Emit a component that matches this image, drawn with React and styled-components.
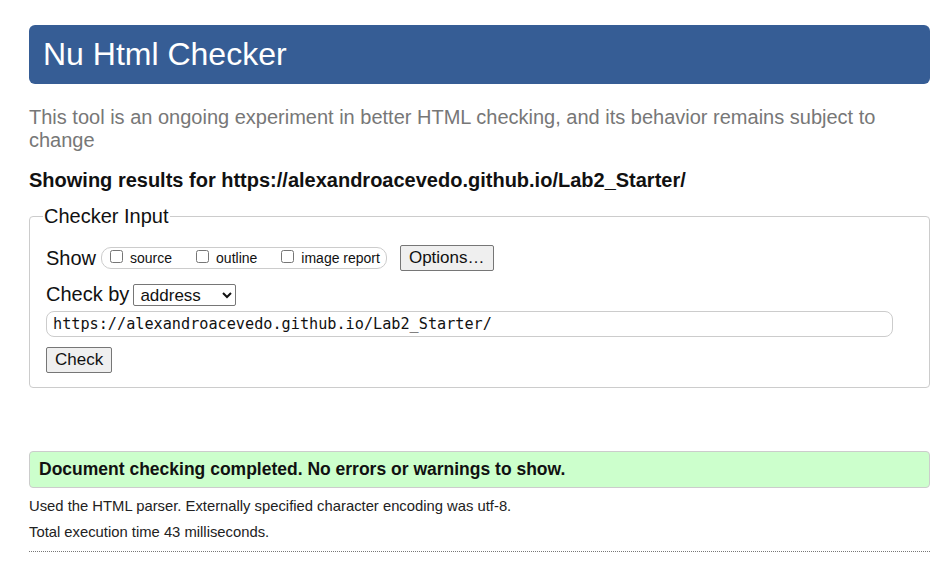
import React from 'react';
import styled, { createGlobalStyle } from 'styled-components';

const Global = createGlobalStyle`
  body {
    margin: 0;
    background: #fff;
    font-family: "Liberation Sans", Arial, sans-serif;
    color: #111;
  }
`;

const Page = styled.div`
  padding: 25px 17px 0 29px;
`;

const Header = styled.h1`
  margin: 0;
  height: 59px;
  display: flex;
  align-items: center;
  padding-left: 14px;
  background: #365d95;
  color: #fff;
  border-radius: 6px;
  font-size: 32px;
  font-weight: normal;
`;

const Intro = styled.p`
  margin: 22px 0 0;
  font-size: 20px;
  line-height: 23px;
  color: #777;
`;

const Results = styled.p`
  margin: 17px 0 0;
  font-size: 20px;
  font-weight: bold;
  line-height: 23px;
`;

const Fieldset = styled.fieldset`
  margin: 13px 0 0;
  padding: 6px 16px 14px;
  border: 1px solid #ccc;
  border-radius: 4px;
`;

const Legend = styled.legend`
  padding: 0 1px;
  font-size: 20px;
  margin-left: -3px;
`;

const Row = styled.div`
  display: flex;
  align-items: center;
  margin-top: ${p => p.$top || 0}px;
  font-size: 20px;
`;

const Pill = styled.span`
  display: inline-flex;
  align-items: center;
  height: 20px;
  margin-left: 5px;
  padding: 0 6px 0 8px;
  border: 1px solid #ccc;
  border-radius: 10px;
  gap: 24px;
`;

const Opt = styled.label`
  display: inline-flex;
  align-items: center;
  font-size: 14px;
  input {
    margin: 0 7px 3px 0;
    width: 13px;
    height: 13px;
  }
`;

const Button = styled.button`
  font-family: "Liberation Sans", Arial, sans-serif;
  font-size: 17px;
  height: 26px;
  padding: 0 8px;
  background: #efefef;
  border: 1px solid #767676;
  border-radius: 2px;
  color: #111;
  margin-left: ${p => p.$left || 0}px;
`;

const Select = styled.select`
  font-family: "Liberation Sans", Arial, sans-serif;
  font-size: 17px;
  height: 22px;
  width: 103px;
  margin-left: 4px;
  border: 1px solid #767676;
  border-radius: 2px;
  background: #fff;
  color: #111;
  padding: 0 0 0 2px;
`;

const UrlInput = styled.input`
  display: block;
  box-sizing: border-box;
  width: 847px;
  height: 26px;
  margin-top: 5px;
  padding: 0 6px;
  font-family: "DejaVu Sans Mono", "Liberation Mono", monospace;
  font-size: 15.2px;
  border: 1px solid #ccc;
  border-radius: 8px;
  color: #111;
`;

const Success = styled.div`
  margin-top: 63px;
  height: 35px;
  display: flex;
  align-items: center;
  padding-left: 9px;
  background: #ccffcc;
  border: 1px solid #ccc;
  border-radius: 4px;
  font-size: 17.5px;
  font-weight: bold;
`;

const Note = styled.p`
  margin: ${p => p.$top}px 0 0;
  font-size: 14.8px;
  line-height: 18px;
  color: #222;
`;

const Rule = styled.hr`
  margin: 10px 0 0;
  border: 0;
  border-top: 1px dotted #777;
`;

export default function App() {
  return (
    <Page>
      <Global />
      <Header>Nu Html Checker</Header>
      <Intro>
        This tool is an ongoing experiment in better HTML checking, and its behavior remains subject to change
      </Intro>
      <Results>Showing results for https://alexandroacevedo.github.io/Lab2_Starter/</Results>
      <Fieldset>
        <Legend>Checker Input</Legend>
        <Row $top={11}>
          Show
          <Pill>
            <Opt><input type="checkbox" />source</Opt>
            <Opt><input type="checkbox" />outline</Opt>
            <Opt><input type="checkbox" />image report</Opt>
          </Pill>
          <Button $left={13}>Options…</Button>
        </Row>
        <Row $top={12}>
          Check by
          <Select defaultValue="address">
            <option value="address">address</option>
          </Select>
        </Row>
        <UrlInput defaultValue="https://alexandroacevedo.github.io/Lab2_Starter/" />
        <Row $top={10}>
          <Button>Check</Button>
        </Row>
      </Fieldset>
      <Success>Document checking completed. No errors or warnings to show.</Success>
      <Note $top={9}>Used the HTML parser. Externally specified character encoding was utf-8.</Note>
      <Note $top={8}>Total execution time 43 milliseconds.</Note>
      <Rule />
    </Page>
  );
}
